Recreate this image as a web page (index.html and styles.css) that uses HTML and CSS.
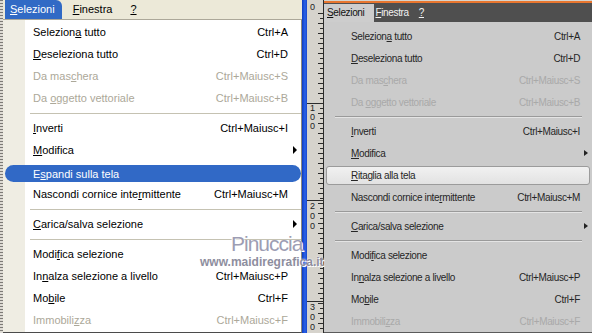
FILE: index.html
```html
<!DOCTYPE html>
<html lang="it">
<head>
  <meta charset="UTF-8">
  <title>Menu Selezioni</title>
  <link rel="stylesheet" href="styles.css">
</head>
<body>
  <div class="screen">
    <div class="edge"></div>

    <!-- finestra stile XP -->
    <div class="win xp">
      <div class="menubar">
        <span class="top open"><u>S</u>elezioni</span>
        <span class="top"><u>F</u>inestra</span>
        <span class="top"><u>?</u></span>
      </div>
      <ul class="menu">
        <li class="item"><span>Selezion<u>a</u> tutto</span><span class="key">Ctrl+A</span></li>
        <li class="item"><span><u>D</u>eseleziona tutto</span><span class="key">Ctrl+D</span></li>
        <li class="item off"><span>Da mas<u>c</u>hera</span><span class="key">Ctrl+Maiusc+S</span></li>
        <li class="item off"><span>Da <u>o</u>ggetto vettoriale</span><span class="key">Ctrl+Maiusc+B</span></li>
        <li class="sep"></li>
        <li class="item"><span><u>I</u>nverti</span><span class="key">Ctrl+Maiusc+I</span></li>
        <li class="item"><span><u>M</u>odifica</span><span class="key"></span><span class="arrow"></span></li>
        <li class="item hot"><span>E<u>s</u>pandi sulla tela</span><span class="key"></span></li>
        <li class="item"><span>Nascondi cornice inte<u>r</u>mittente</span><span class="key">Ctrl+Maiusc+M</span></li>
        <li class="sep"></li>
        <li class="item"><span><u>C</u>arica/salva selezione</span><span class="key"></span><span class="arrow"></span></li>
        <li class="sep"></li>
        <li class="item"><span>Modi<u>f</u>ica selezione</span><span class="key"></span></li>
        <li class="item"><span>In<u>n</u>alza selezione a livello</span><span class="key">Ctrl+Maiusc+P</span></li>
        <li class="item"><span>Mo<u>b</u>ile</span><span class="key">Ctrl+F</span></li>
        <li class="item off"><span>Immobili<u>z</u>za</span><span class="key">Ctrl+Maiusc+F</span></li>
      </ul>
    </div>

    <div class="frame"></div>

    <svg class="ruler" width="17" height="333" viewBox="0 0 17 333">
      <defs>
        <pattern id="ticks" width="17" height="10" y="3" patternUnits="userSpaceOnUse">
          <path d="M11 0.5H16M13 5.5H16" stroke="#2b2b2b" stroke-width="1"/>
        </pattern>
      </defs>
      <rect width="17" height="333" fill="#d6d3cc"/>
      <rect y="12" width="17" height="321" fill="url(#ticks)"/>
      <path d="M0 103.5H17M0 200.5H17M0 301.5H17M16.5 0V333" stroke="#2b2b2b"/>
      <g font-family="Liberation Sans, sans-serif" font-size="9" fill="#222">
        <text x="3" y="10">0</text>
        <text x="3" y="111">1</text>
        <text x="3" y="120">0</text>
        <text x="3" y="129">0</text>
        <text x="3" y="209">2</text>
        <text x="3" y="219">0</text>
        <text x="3" y="229">0</text>
        <text x="3" y="310">3</text>
        <text x="3" y="320">0</text>
        <text x="3" y="330">0</text>
      </g>
    </svg>

    <!-- finestra tema scuro -->
    <div class="win dk">
      <div class="menubar">
        <span class="top open"><u>S</u>elezioni</span>
        <span class="top"><u>F</u>inestra</span>
        <span class="top"><u>?</u></span>
      </div>
      <ul class="menu">
        <li class="item"><span>Selezion<u>a</u> tutto</span><span class="key">Ctrl+A</span></li>
        <li class="item"><span><u>D</u>eseleziona tutto</span><span class="key">Ctrl+D</span></li>
        <li class="item off"><span>Da mas<u>c</u>hera</span><span class="key">Ctrl+Maiusc+S</span></li>
        <li class="item off"><span>Da <u>o</u>ggetto vettoriale</span><span class="key">Ctrl+Maiusc+B</span></li>
        <li class="sep"></li>
        <li class="item"><span><u>I</u>nverti</span><span class="key">Ctrl+Maiusc+I</span></li>
        <li class="item"><span><u>M</u>odifica</span><span class="key"></span><span class="arrow"></span></li>
        <li class="item hot"><span><u>R</u>itaglia alla tela</span><span class="key"></span></li>
        <li class="item"><span>Nascondi cornice inte<u>r</u>mittente</span><span class="key">Ctrl+Maiusc+M</span></li>
        <li class="sep"></li>
        <li class="item"><span><u>C</u>arica/salva selezione</span><span class="key"></span><span class="arrow"></span></li>
        <li class="sep"></li>
        <li class="item"><span>Modi<u>f</u>ica selezione</span><span class="key"></span></li>
        <li class="item"><span>In<u>n</u>alza selezione a livello</span><span class="key">Ctrl+Maiusc+P</span></li>
        <li class="item"><span>Mo<u>b</u>ile</span><span class="key">Ctrl+F</span></li>
        <li class="item off"><span>Immobili<u>z</u>za</span><span class="key">Ctrl+Maiusc+F</span></li>
      </ul>
    </div>

    <div class="mark">
      <span class="mark-name">Pinuccia</span>
      <span class="mark-url">www.maidiregrafica.it</span>
    </div>
  </div>
</body>
</html>
```

FILE: styles.css
```css
body {
  margin: 0;
  font-family: "Liberation Sans", Arial, sans-serif;
}
.screen {
  position: relative;
  display: flex;
  width: 592px;
  height: 333px;
  overflow: hidden;
  background: #d6d3cc;
}
.edge {
  width: 3px;
  background: repeating-linear-gradient(#7d7b76 0 1px, #dedbd4 1px 3px);
}
.win {
  display: flex;
  flex-direction: column;
}
.menubar {
  display: flex;
  white-space: nowrap;
}
.menu {
  flex: 1;
  list-style: none;
  margin: 0;
}
.item {
  display: grid;
  grid-template-columns: 1fr auto 13px;
  align-items: center;
  height: 22px;
  white-space: nowrap;
}
.arrow {
  justify-self: center;
  width: 0;
  height: 0;
  border-left: 4px solid #000;
  border-top: 4px solid transparent;
  border-bottom: 4px solid transparent;
}

/* XP */
.xp {
  width: 299px;
  font-size: 11px;
  color: #000;
}
.xp .menubar {
  height: 19px;
  line-height: 19px;
  padding-left: 2px;
  background: #ece9d8;
}
.xp .top {
  padding: 0 7px 0 5px;
}
.xp .top + .top {
  margin-left: 6px;
}
.xp .top.open {
  background: #316ac5;
  color: #fff;
  border-radius: 0 6px 0 0;
}
.xp .menu {
  padding: 1px 0 0;
  border-top: 1px solid #aca899;
  border-right: 1px solid #8d8a7e;
  border-bottom: 1px solid #4b4b4b;
  background: linear-gradient(to right, #efede3 22px, #fff 22px);
}
.xp .item {
  padding-left: 30px;
}
.xp .off {
  color: #aca899;
}
.xp .hot {
  height: 17px;
  margin: 4px 0 1px 2px;
  padding-left: 28px;
  border-radius: 9px;
  background: #3169c6;
  color: #fff;
}
.xp .sep {
  display: flex;
  align-items: center;
  height: 8px;
  padding-left: 27px;
}
.xp .sep::after {
  content: "";
  flex: 1;
  border-top: 1px solid #c5c2b2;
}

.frame {
  width: 5px;
  background: linear-gradient(to right, #0d3bc2, #2a63e8 60%, #1845cc);
}
.ruler {
  display: block;
  flex: none;
}

/* tema scuro */
.dk {
  flex: 1;
  font-size: 10px;
  letter-spacing: -0.35px;
  color: #262626;
}
.dk .menubar {
  height: 19px;
  margin-top: 1px;
  border-top: 2px solid #e8762f;
  background: #4f4f4f;
  color: #f2f2f2;
  line-height: 19px;
}
.dk .top {
  padding: 0 1px;
}
.dk .top.open {
  margin-top: 1px;
  padding: 0 10px 0 3px;
  background: #cdcdcd;
  color: #111;
  line-height: 17px;
}
.dk .top + .top + .top {
  margin-left: 8px;
}
.dk .menu {
  padding: 3px 0 0;
  background: #cbcbcb;
  border-bottom: 1px solid #5a5a5a;
}
.dk .item {
  grid-template-columns: 1fr auto 12px;
  padding-left: 27px;
}
.dk .off {
  color: #a9a9a9;
}
.dk .arrow {
  border-left-color: #222;
  border-top-width: 3px;
  border-bottom-width: 3px;
}
.dk .hot {
  box-sizing: border-box;
  height: 19px;
  margin: 2px 2px 1px 2px;
  padding-left: 24px;
  border: 1px solid #9b9b9b;
  border-radius: 3px;
  background: linear-gradient(#f1f1f1, #e2e2e2);
}
.dk .sep {
  display: flex;
  flex-direction: column;
  justify-content: center;
  height: 7px;
  padding: 0 10px 0 11px;
}
.dk .sep::after {
  content: "";
  border-top: 1px solid #9a9a9a;
  border-bottom: 1px solid #e4e4e4;
}

/* filigrana */
.mark {
  position: absolute;
  left: 200px;
  top: 233px;
  display: flex;
  flex-direction: column;
  line-height: 1;
}
.mark-name {
  margin-left: 31px;
  font-size: 21px;
  letter-spacing: -1px;
  color: #9d9db3;
  text-shadow: 1px 1px 0 #fff, -1px 0 0 #fff;
}
.mark-url {
  margin-top: 2px;
  font-size: 12px;
  font-weight: bold;
  color: #8e8e9e;
  text-shadow: 0 0 2px #fff, 1px 1px 0 #fff;
}
```
